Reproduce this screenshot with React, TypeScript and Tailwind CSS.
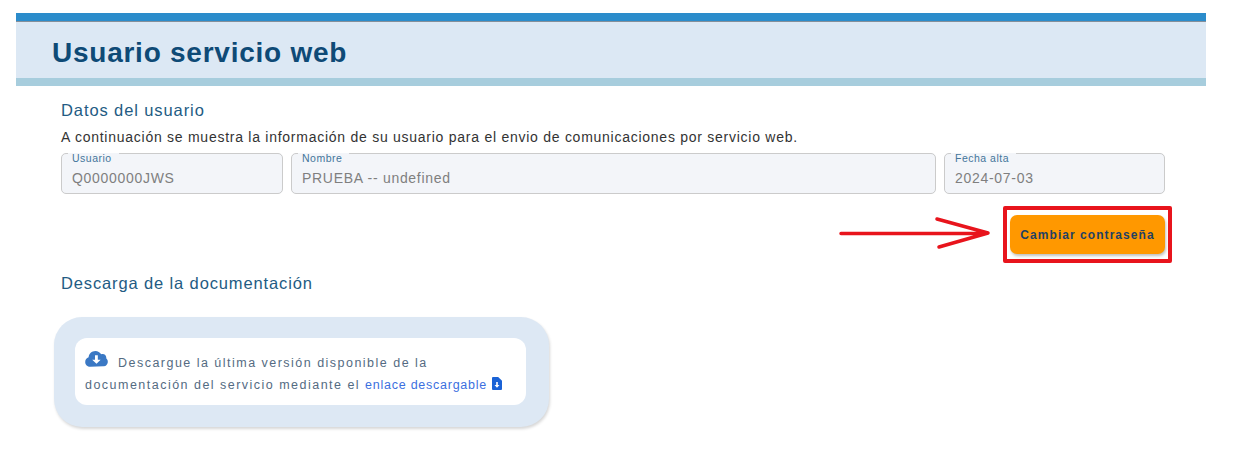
const fields = [
  { label: "Usuario", value: "Q0000000JWS", width: "w-[222px]" },
  { label: "Nombre", value: "PRUEBA -- undefined", width: "flex-1" },
  { label: "Fecha alta", value: "2024-07-03", width: "w-[221px]" },
];

function CloudDownload() {
  return (
    <svg viewBox="0 0 24 17" className="inline-block w-[23px] h-[16px] fill-[#3a78c4]">
      <path d="M5.4 16.8C2.4 16.8 0 14.5 0 11.6c0-2.3 1.5-4.2 3.6-4.9C3.9 3 7 0 10.8 0c2.6 0 4.9 1.4 6.2 3.5 .5-.2 1-.3 1.6-.3 2.1 0 3.800 1.7 3.800 3.8 0 .3 0 .5-.1.8 1 .8 1.700 2.100 1.700 3.500 0 2.700-2.100 5-4.800 5z" />
      <path d="M10.4 4.6h3v4.6h3L12 13.6 7.400 9.200h3z" fill="#fff" />
    </svg>
  );
}

function FileDownload() {
  return (
    <svg viewBox="0 0 10 13" className="inline-block w-[10px] h-[13px] align-[-1px] fill-[#1a62d6]">
      <path d="M1 0h5.200L10 3.800V12a1 1 0 0 1-1 1H1a1 1 0 0 1-1-1V1a1 1 0 0 1 1-1z" />
      <path d="M4.200 5h1.600v3h1.700L5 10.800 2.500 8h1.700z" fill="#fff" />
    </svg>
  );
}

export default function App() {
  return (
    <div className="relative h-[471px] bg-white overflow-hidden font-['Liberation_Sans',Arial,sans-serif] pt-[13px] px-[16px] w-[1222px]">
      <header className="border-t-[8px] border-b-[8px] border-t-[#2b8ccb] border-b-[#a7cddd] bg-[#dce8f4] shadow-[inset_0_1px_0_rgba(60,70,80,0.55)] h-[73px] pl-[36px] pt-[6px] flex items-center">
        <h1 className="text-[28px] font-bold tracking-[0.75px] text-[#0e4a76]">Usuario servicio web</h1>
      </header>

      <section className="pl-[45px] pr-[41px] pt-[14px]">
        <h2 className="text-[16.5px] leading-[20px] tracking-[0.9px] text-[#235b83]">Datos del usuario</h2>
        <p className="mt-[8px] text-[14px] leading-[18px] tracking-[0.74px] text-[#333333]">
          A continuación se muestra la información de su usuario para el envio de comunicaciones por servicio web.
        </p>

        <div className="flex gap-[8px] mt-[7px]">
          {fields.map((f) => (
            <fieldset key={f.label} className={`${f.width} h-[41px] border border-[#cbcbcb] rounded-[5px] bg-[#f3f5f9] pl-[6px]`}>
              {/* la etiqueta cae por debajo de la linea del borde */}
              <legend className="h-[1px] pl-[4px] pr-[7px] text-[10.5px] leading-[11px] tracking-[0.5px] text-[#44769b]">{f.label}</legend>
              <div className="pl-[4px] pt-[14px] text-[14px] leading-[20px] tracking-[0.7px] text-[#7f7f7f]">{f.value}</div>
            </fieldset>
          ))}
        </div>

        <div className="flex justify-end mt-[12px] -mr-[7px]">
          <div className="border-[4px] border-[#e8141c] rounded-[2px] px-[3px] w-[169px] h-[57px] flex items-center">
            <button className="w-[155px] h-[39px] rounded-[7px] bg-[#ff9800] shadow-[1px_2px_3px_rgba(0,0,0,0.25)] text-[12px] font-bold tracking-[1.05px] text-[#1f4163]">
              Cambiar contraseña
            </button>
          </div>
        </div>

        <h2 className="mt-[10px] text-[16.5px] leading-[20px] tracking-[0.87px] text-[#235b83]">Descarga de la documentación</h2>

        <div className="mt-[24px] -ml-[7px] w-[495px] h-[110px] rounded-[28px] bg-[#dde8f4] p-[21px] pr-[23px] shadow-[1px_2px_3px_rgba(0,0,0,0.16)]">
          <div className="h-[67px] rounded-[12px] bg-white px-[10px] pt-[13px] text-[12.5px] leading-[21px] tracking-[1.48px] text-[#546b82]">
            <div className="flex items-start h-[21px]">
              <CloudDownload />
              <span className="ml-[10px] mt-[2px]">Descargue la última versión disponible de la</span>
            </div>
            <div className="mt-[3px] whitespace-nowrap">
              documentación del servicio mediante el{" "}
              <a className="text-[#3c6fe0] tracking-[0.75px]">enlace descargable</a> <FileDownload />
            </div>
          </div>
        </div>
      </section>

      {/* flecha roja dibujada encima */}
      <svg className="absolute left-[836px] top-[215px] w-[156px] h-[36px]" viewBox="0 0 156 36" fill="none">
        <path d="M5 18.500H150M101 4L152 18 103 32" stroke="#e8141c" strokeWidth="3.500" strokeLinecap="round" strokeLinejoin="round" />
      </svg>
    </div>
  );
}
